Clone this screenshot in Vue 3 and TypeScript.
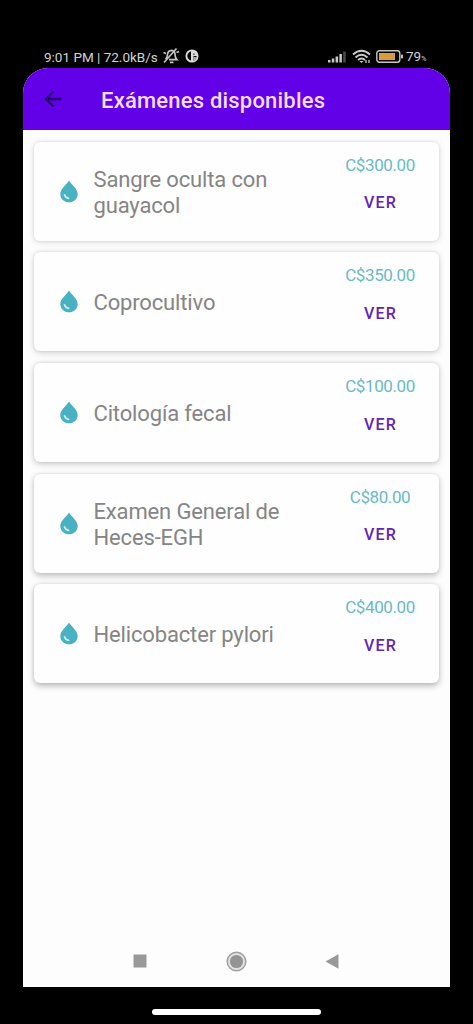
<script setup lang="ts">
interface Exam {
  name: string
  price: string
}

const exams: Exam[] = [
  { name: 'Sangre oculta con guayacol', price: 'C$300.00' },
  { name: 'Coprocultivo', price: 'C$350.00' },
  { name: 'Citología fecal', price: 'C$100.00' },
  { name: 'Examen General de Heces-EGH', price: 'C$80.00' },
  { name: 'Helicobacter pylori', price: 'C$400.00' },
]

// Elevation shadows deepen for cards further down the list.
function cardShadow(index: number): string {
  const key = 0.15 + index * 0.03
  return `0 ${1 + index * 0.4}px 6px rgba(0, 0, 0, ${key.toFixed(3)}), 0 0 3px rgba(0, 0, 0, 0.08)`
}
</script>

<template>
  <div class="device">
    <div class="status">
      <span class="clock">9:01 PM | 72.0kB/s</span>
      <svg class="mute" width="18" height="18" viewBox="0 0 18 18" fill="none" stroke="#c4c4c4" stroke-width="1.700">
        <path d="M3.500 12 Q5.500 10.500 5.500 7.500 Q6 3.500 9.500 3.300 Q13 3.500 13 7.500 Q13 10.500 15 12.700 H7" />
        <path d="M14.500 1.500 L2 15.500 M8 15.300 H11.500 M1.500 5.500 L4 6.500 M14.500 5.500 L17 4.500" />
      </svg>
      <svg class="disc" width="14" height="14" viewBox="0 0 14 14">
        <circle cx="7" cy="7" r="5.600" fill="none" stroke="#dcdcdc" stroke-width="1.900" />
        <path d="M6 2 H11 L12.500 7 H8.500 V12 H6 Z" fill="#dcdcdc" />
        <path d="M8.500 8 H12 L10.500 11.500 L8.500 12.500 Z" fill="#aaa" />
        <path d="M8.200 4.500 H9.700 V6 H8.200 Z" fill="#555" />
      </svg>
      <span class="spacer" />
      <svg class="signal" width="19" height="13" viewBox="0 0 19 13" fill="#c8c8c8">
        <rect x="1" y="10" width="2.500" height="2.500" />
        <rect x="4.800" y="8.500" width="2.500" height="4" />
        <rect x="8.600" y="6.500" width="2.500" height="6" />
        <rect x="12.400" y="4" width="2.500" height="8.500" />
        <rect x="16.200" y="1.500" width="2.500" height="11" fill="#4b4b4b" />
      </svg>
      <svg class="wifi" width="19" height="15" viewBox="0 0 19 15" fill="none" stroke="#cccccc" stroke-width="1.900">
        <path d="M1 5.500 Q9.500 -2 18 5.500 M3.500 8.500 Q9.500 3 15.500 8.500 M6 11 Q9.500 8 13 11" />
        <path d="M7.500 12 L9.500 14 L11.500 12 Z" fill="#cccccc" stroke="none" />
        <path d="M14 11 V14 M17 11 V14" stroke-width="1.300" />
      </svg>
      <svg class="battery" width="28" height="13" viewBox="0 0 28 13">
        <rect x="0.800" y="0.800" width="23" height="11.400" rx="2.500" fill="none" stroke="#c9c5bc" stroke-width="1.400" />
        <rect x="3" y="3" width="16" height="7" fill="#d99b3f" />
        <rect x="25" y="4.500" width="2" height="4" rx="0.800" fill="#c9c5bc" />
      </svg>
      <span class="level">79<small>%</small></span>
    </div>

    <main class="screen">
      <header class="appbar">
        <svg class="back" width="20" height="20" viewBox="0 0 20 20" fill="none" stroke="#25006f" stroke-width="2.300">
          <path d="M18.500 10 H3 M10.500 2.500 L3 10 L10.500 17.500" />
        </svg>
        <h1>Exámenes disponibles</h1>
      </header>

      <section class="list">
        <article v-for="(exam, index) in exams" :key="exam.name" class="card" :style="{ boxShadow: cardShadow(index) }">
          <svg class="drop" width="18" height="23" viewBox="0 0 18 23">
            <path d="M9 0.500 C7.500 4 0.300 8.500 0.300 14 C0.300 19 4.300 22.300 9 22.300 S17.700 19 17.700 14 C17.700 8.500 10.500 4 9 0.500 Z" fill="#48b1c2" />
            <path d="M4.500 14.800 C5 16.700 6.500 18 8.600 18.300" fill="none" stroke="#c9edf1" stroke-width="1.800" stroke-linecap="round" />
          </svg>
          <h2>{{ exam.name }}</h2>
          <div class="side">
            <span class="price">{{ exam.price }}</span>
            <button type="button">VER</button>
          </div>
        </article>
      </section>

      <nav class="nav">
        <svg width="14" height="14" viewBox="0 0 14 14"><rect x="0.500" y="0.500" width="13" height="13" fill="#999" /></svg>
        <svg width="21" height="21" viewBox="0 0 21 21">
          <circle cx="10.500" cy="10.500" r="9.300" fill="#e2e2e2" stroke="#a0a0a0" stroke-width="1.500" />
          <circle cx="10.500" cy="10.500" r="6.600" fill="#949494" />
        </svg>
        <svg width="14" height="15" viewBox="0 0 14 15"><path d="M0.500 7.500 L13.500 0.300 V14.700 Z" fill="#999" /></svg>
      </nav>
    </main>
    <div class="home" />
  </div>
</template>

<style>
body {
  margin: 0;
  background: #000;
}
</style>

<style scoped>
.device {
  box-sizing: border-box;
  width: 473px;
  height: 1024px;
  padding: 44px 23px 0;
  overflow: hidden;
  background: #000;
  font-family: Roboto, "Liberation Sans", sans-serif;
}
.status {
  display: flex;
  align-items: center;
  height: 24px;
  padding: 0 22px 0 21px;
  color: #d2d2d2;
}
.clock {
  width: 114px;
  padding-top: 1px;
  font-size: 13.500px;
  letter-spacing: 0;
  white-space: nowrap;
}
.mute {
  margin-left: 4px;
}
.disc {
  margin-left: 5px;
}
.spacer {
  flex: 1;
}
.wifi {
  margin-left: 6px;
}
.battery {
  margin-left: 5px;
}
.level {
  width: 22px;
  margin-left: 2px;
  font-size: 13.500px;
  white-space: nowrap;
}
.level small {
  font-size: 7px;
}
.screen {
  display: flex;
  flex-direction: column;
  height: 919px;
  overflow: hidden;
  border-radius: 25px 25px 0 0;
  background: #fdfdfd;
}
.appbar {
  display: flex;
  flex: none;
  align-items: center;
  box-sizing: border-box;
  height: 62px;
  padding: 2px 0 0 20px;
  background: #6200e8;
}
.back {
  margin-top: -3px;
}
.appbar h1 {
  margin: 0 0 0 38px;
  color: #f4dcff;
  font-size: 22px;
  font-weight: 500;
  letter-spacing: 0.2px;
  white-space: nowrap;
}
.list {
  display: flex;
  flex: 1;
  flex-direction: column;
  gap: 11.600px;
  padding: 11.900px 11px 0;
}
.card {
  display: flex;
  align-items: center;
  box-sizing: border-box;
  height: 99px;
  padding-left: 26px;
  border-radius: 6px;
  background: #fefefe;
}
.drop {
  flex: none;
}
.card h2 {
  width: 210px;
  margin: 3px 0 0 15.500px;
  color: #858585;
  font-size: 22px;
  font-weight: 400;
  letter-spacing: -0.15px;
  line-height: 26px;
}
.side {
  display: flex;
  flex-direction: column;
  align-items: center;
  align-self: flex-start;
  width: 100px;
  margin-left: 26.500px;
  padding-top: 13px;
}
.price {
  color: #69bac8;
  font-size: 17px;
  letter-spacing: -0.4px;
  line-height: 20px;
}
.side button {
  margin: 18.500px 0 0 1px;
  padding: 0;
  border: 0;
  background: none;
  color: #6424b8;
  font: 500 16px/20px Roboto, "Liberation Sans", sans-serif;
  letter-spacing: 1.200px;
}
.nav {
  display: flex;
  flex: none;
  align-items: center;
  justify-content: space-between;
  height: 52px;
  padding: 0 111px 0 110px;
}
.home {
  width: 169px;
  height: 6px;
  margin: 22px auto 0;
  border-radius: 3px;
  background: #fff;
}
</style>
